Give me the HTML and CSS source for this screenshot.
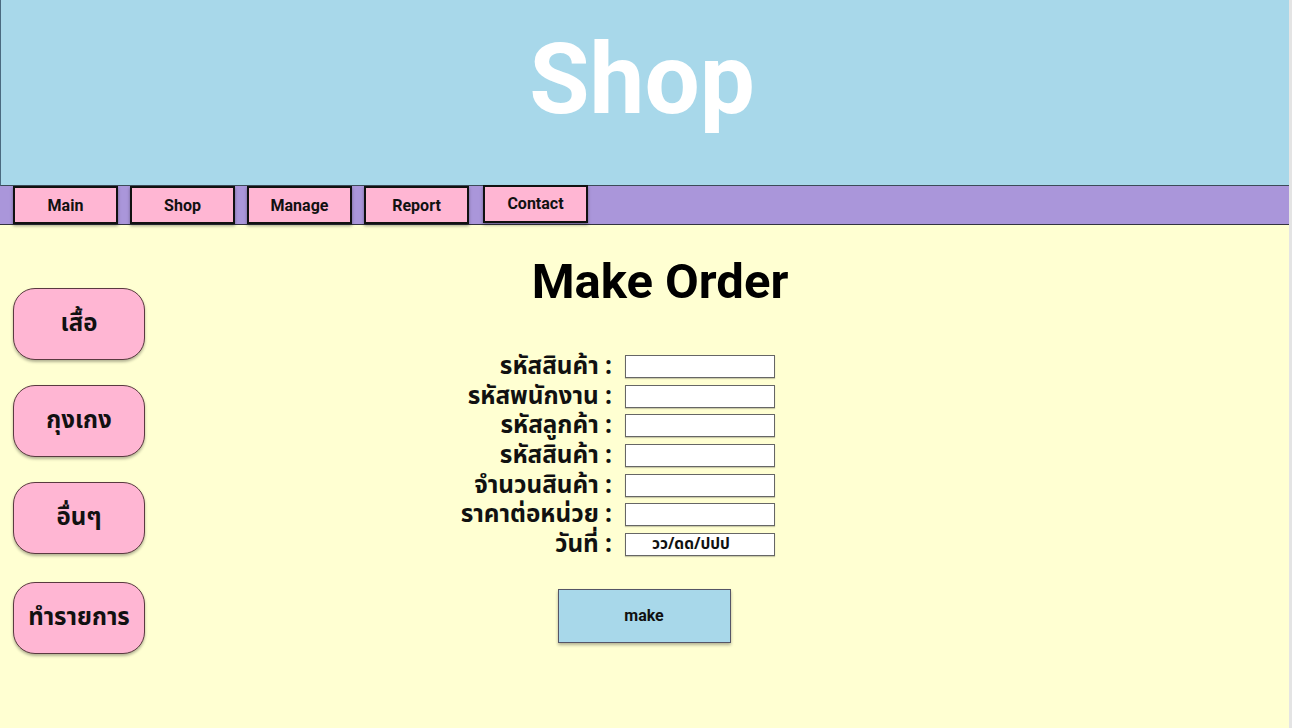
FILE: index.html
```html
<!DOCTYPE html>
<html lang="th">
<head>
<meta charset="utf-8">
<title>Shop</title>
<link rel="stylesheet" href="styles.css">
</head>
<body>
<div class="page">
  <header class="header">
    <h1 class="brand">Shop</h1>
  </header>
  <nav class="nav">
    <a class="nav-btn">Main</a>
    <a class="nav-btn">Shop</a>
    <a class="nav-btn">Manage</a>
    <a class="nav-btn">Report</a>
    <a class="nav-btn nav-btn-up">Contact</a>
  </nav>
  <main class="main">
    <aside class="sidebar">
      <a class="side-btn">เสื้อ</a>
      <a class="side-btn">กุงเกง</a>
      <a class="side-btn">อื่นๆ</a>
      <a class="side-btn side-btn-last">ทำรายการ</a>
    </aside>
    <section class="content">
      <h2 class="title">Make Order</h2>
      <form class="order-form">
        <label class="lbl">รหัสสินค้า :</label><input class="field" type="text">
        <label class="lbl">รหัสพนักงาน :</label><input class="field" type="text">
        <label class="lbl">รหัสลูกค้า :</label><input class="field" type="text">
        <label class="lbl">รหัสสินค้า :</label><input class="field" type="text">
        <label class="lbl">จำนวนสินค้า :</label><input class="field" type="text">
        <label class="lbl">ราคาต่อหน่วย :</label><input class="field" type="text">
        <label class="lbl">วันที่ :</label><div class="field date">วว/ดด/ปปป</div>
      </form>
      <button class="make-btn" type="button">make</button>
    </section>
  </main>
</div>
</body>
</html>
```

FILE: styles.css
```css
html, body {
  margin: 0;
  padding: 0;
  height: 100%;
}
body {
  background: #e4e4e4;
  font-family: Roboto, "Liberation Sans", sans-serif;
}
.page {
  width: 1289px;
  height: 728px;
  background: #ffffd2;
  display: flex;
  flex-direction: column;
}
.header {
  height: 185px;
  background: #a8d8ea;
  border-left: 1px solid #4a6a80;
  border-bottom: 1px solid #3c4a58;
  display: flex;
  justify-content: center;
  align-items: flex-start;
}
.brand {
  margin: 31px 6px 0 0;
  font-family: Roboto, sans-serif;
  font-weight: 700;
  font-size: 98px;
  line-height: 1;
  color: #ffffff;
}
.nav {
  height: 38px;
  background: #aa96da;
  border-bottom: 1px solid #333340;
  display: flex;
  align-items: flex-start;
  gap: 12px;
  padding-left: 13px;
}
.nav-btn {
  box-sizing: border-box;
  width: 105px;
  height: 38px;
  background: #ffb6d3;
  border: 2px solid #111;
  box-shadow: 0 2px 3px rgba(0,0,0,0.35);
  display: flex;
  align-items: center;
  justify-content: center;
  font-family: Roboto, sans-serif;
  font-weight: 700;
  font-size: 16px;
  color: #111;
}
.nav-btn-up {
  margin-top: -1px;
  margin-left: 2px;
  padding-bottom: 2px;
}
.main {
  flex: 1;
  display: flex;
  align-items: flex-start;
}
.sidebar {
  width: 132px;
  margin-left: 13px;
  padding-top: 63px;
  display: flex;
  flex-direction: column;
  gap: 25px;
}
.side-btn {
  box-sizing: border-box;
  height: 72px;
  background: #ffb6d3;
  border: 1px solid #5a3a40;
  border-radius: 22px;
  box-shadow: 0 2px 3px rgba(0,0,0,0.3);
  display: flex;
  align-items: center;
  justify-content: center;
  font-family: "Noto Sans Thai", "Noto Sans Thai Looped", "Noto Sans", Tahoma, sans-serif;
  font-weight: 700;
  font-size: 24px;
  color: #111;
}
.side-btn-last {
  margin-top: 3px;
}
.content {
  flex: 1;
  padding-right: 146px;
  display: flex;
  flex-direction: column;
  align-items: center;
}
.title {
  margin: 30px 0 0 32px;
  font-family: Roboto, sans-serif;
  font-weight: 700;
  font-size: 49px;
  line-height: 1.1;
  color: #000;
}
.order-form {
  align-self: flex-start;
  margin-top: 43px;
  display: grid;
  grid-template-columns: 467px 150px;
  grid-auto-rows: 29.7px;
  column-gap: 13px;
}
.lbl {
  text-align: right;
  font-family: "Noto Sans Thai", "Noto Sans Thai Looped", "Noto Sans", Tahoma, sans-serif;
  font-weight: 700;
  font-size: 24.3px;
  line-height: 29.7px;
  height: 29.7px;
  color: #111;
  align-self: start;
  white-space: nowrap;
}
.field {
  box-sizing: border-box;
  width: 150px;
  height: 23px;
  margin: 3px 0 0 0;
  padding: 0;
  background: #fff;
  border: 1px solid #666;
  box-shadow: 0 1px 1px rgba(0,0,0,0.2);
  align-self: start;
}
.date {
  display: flex;
  align-items: center;
  justify-content: flex-start;
  padding-left: 26px;
  font-family: "Noto Sans Thai", "Noto Sans Thai Looped", "Noto Sans", sans-serif;
  font-weight: 700;
  font-size: 15.5px;
  color: #111;
}
.make-btn {
  margin-top: 29px;
  width: 173px;
  height: 54px;
  background: #a8d8ea;
  border: 1px solid #556;
  box-shadow: 0 2px 3px rgba(0,0,0,0.3);
  font-family: Roboto, sans-serif;
  font-weight: 700;
  font-size: 16px;
  color: #111;
}
```
